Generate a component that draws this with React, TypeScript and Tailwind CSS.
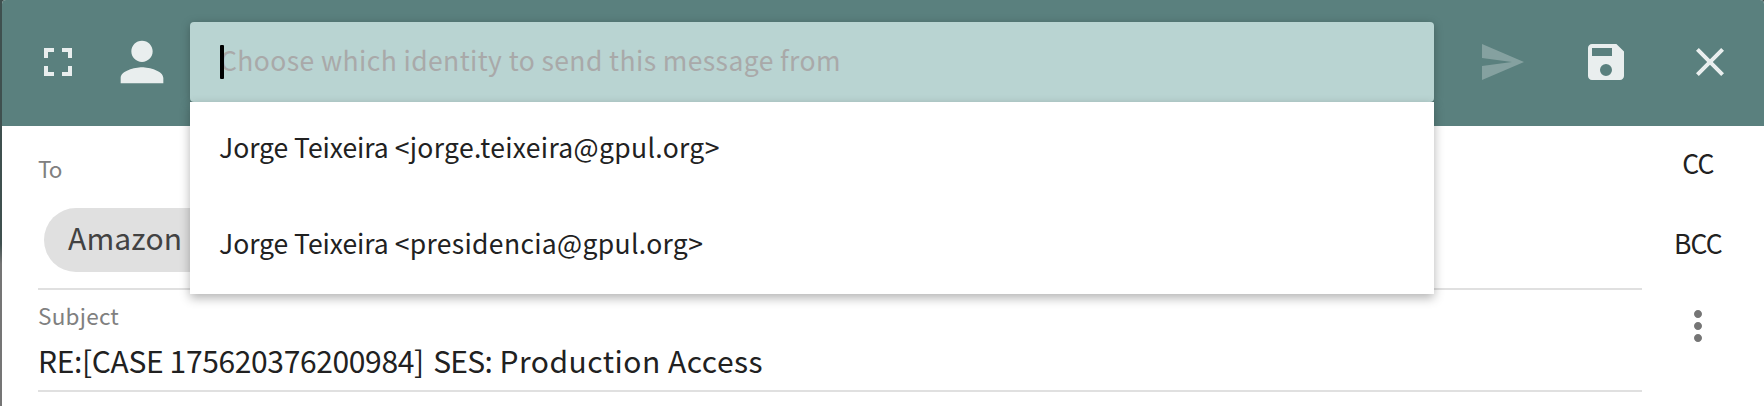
import React from "react";

const ICONS = {
  fullscreen: "M7 14H5v5h5v-2H7v-3zm-2-4h2V7h3V5H5v5zm12 7h-3v2h5v-5h-2v3zM14 5v2h3v3h2V5h-5z",
  person: "M12 12c2.21 0 4-1.79 4-4s-1.79-4-4-4-4 1.79-4 4 1.79 4 4 4zm0 2c-2.67 0-8 1.34-8 4v2h16v-2c0-2.66-5.33-4-8-4z",
  send: "M2.01 21L23 12 2.01 3 2 10l15 2-15 2z",
  save: "M17.2 3H5c-1.11 0-2 .9-2 2v14c0 1.1.89 2 2 2h14c1.1 0 2-.9 2-2V6.8zM12 19a3 3 0 1 1 0-6 3 3 0 0 1 0 6zM5 9V5h10v4z",
  close: "M19 6.41L17.59 5 12 10.59 6.41 5 5 6.41 10.59 12 5 17.59 6.41 19 12 13.41 17.59 19 19 17.59 13.41 12z",
  more: "M12 8c1.1 0 2-.9 2-2s-.9-2-2-2-2 .9-2 2 .9 2 2 2zm0 2c-1.1 0-2 .9-2 2s.9 2 2 2 2-.9 2-2-.9-2-2-2zm0 6c-1.1 0-2 .9-2 2s.9 2 2 2 2-.9 2-2-.9-2-2-2z",
};

function Icon({ name, className }: { name: keyof typeof ICONS; className: string }) {
  return (
    <svg viewBox="0 0 24 24" fill="currentColor" fillRule="evenodd" className={`shrink-0 ${className}`}>
      <path d={ICONS[name]} />
    </svg>
  );
}

function Identity({ name, address }: { name: string; address: string }) {
  return (
    <li className="flex h-24 items-center px-[29px] pb-[7px] text-[26.5px] leading-10 whitespace-nowrap">
      <span className="tracking-[-0.05px]">
        {name} <span className="tracking-[0.33px]">&lt;{address}&gt;</span>
      </span>
    </li>
  );
}

export default function App() {
  return (
    <div className="flex h-[406px] w-[1764px] overflow-hidden bg-linear-to-b from-[#3f504f] from-60% to-[#757575] to-65% pl-0.5 font-['Noto_Sans_CJK_JP',sans-serif] text-[#212121]">
      <div className="flex grow flex-col overflow-hidden rounded-t-[4px] bg-white">
        <header className="flex h-[126px] shrink-0 bg-[#5a807e] pt-[22px] text-[#e9eeee]">
          <div className="flex h-20 w-[188px] items-start pl-8">
            <Icon name="fullscreen" className="mt-4 size-12" />
            <Icon name="person" className="mt-2 ml-7 size-16" />
          </div>
          <div className="relative z-10 h-20 w-[1244px] rounded-[4px] bg-[#b9d4d2] shadow-[0_2px_10px_rgba(0,0,0,0.26)]">
            <div className="flex h-20 items-start pl-[30px]">
              <span className="relative z-10 mt-[23px] h-[34px] w-1 shrink-0 rounded-[1px] bg-black" />
              <span className="-ml-[4px] pt-[18px] text-[26.5px] leading-10 tracking-[0.4px] whitespace-nowrap text-[#a9a9a9]">
                Choose which identity to send this message from
              </span>
            </div>
            <ul className="absolute top-20 left-0 h-48 w-[1244px] bg-white text-[#212121] shadow-[0_4px_10px_rgba(0,0,0,0.3)]">
              <Identity name="Jorge Teixeira" address="jorge.teixeira@gpul.org" />
              <Identity name="Jorge Teixeira" address="presidencia@gpul.org" />
            </ul>
          </div>
          <div className="flex h-20 items-center gap-14 pl-11">
            <Icon name="send" className="size-12 opacity-30" />
            <Icon name="save" className="size-12" />
            <Icon name="close" className="size-12" />
          </div>
        </header>
        <div className="flex grow">
          <div className="ml-9 w-[1604px]">
            <div className="h-[164px] border-b-2 border-[#e0e0e0] pt-[26px]">
              <div className="h-14 text-[22.5px] leading-[33px] tracking-[-1px] text-[#808080]">To</div>
              <div className="ml-1.5 h-16 w-[400px] rounded-full bg-[#e0e0e0] pl-6 text-[30px] leading-[58px] tracking-[0.14px] text-[#424242]">
                Amazon
              </div>
            </div>
            <div className="h-[102px] border-b-2 border-[#e0e0e0] pt-[9px]">
              <div className="h-[32px] text-[22.5px] leading-[32px] tracking-[0.25px] text-[#808080]">Subject</div>
              <div className="h-11 pt-[4px] text-[30px] leading-[50px] tracking-[-0.36px] whitespace-nowrap">
                RE:[CASE 175620376200984]{" "}
                <span className="ml-[3px] tracking-[-0.7px]">SES:</span>{" "}
                <span className="ml-px tracking-[0.5px]">Production Access</span>
              </div>
            </div>
          </div>
          <div className="flex w-[112px] flex-col items-center text-[26.5px] leading-10 tracking-[-0.8px]">
            <div className="mt-4 h-20 pt-px">CC</div>
            <div className="h-20 pt-px">BCC</div>
            <Icon name="more" className="size-12 text-[#757575]" />
          </div>
        </div>
      </div>
    </div>
  );
}
